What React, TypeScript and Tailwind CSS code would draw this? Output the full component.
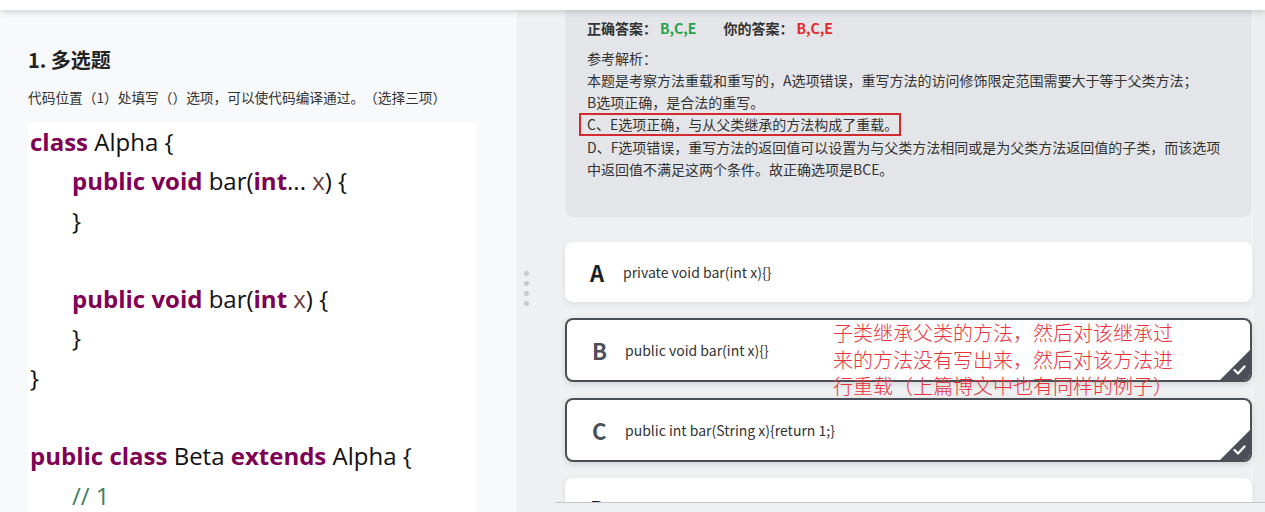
import React from "react";

const K = ({ children }: { children: React.ReactNode }) => (
  <span className="font-bold text-[#7f0055]">{children}</span>
);
const P = ({ children }: { children: React.ReactNode }) => (
  <span className="text-[#6a3e3e]">{children}</span>
);

const Check = () => (
  <div className="absolute bottom-0 right-0 w-[30px] h-[30px] bg-[#4b5058] [clip-path:polygon(100%_0,100%_100%,0_100%)]">
    <svg className="absolute right-[4px] bottom-[5px]" width="13" height="10" viewBox="0 0 13 10">
      <polyline points="1.5,5 5,8.5 11.5,1.5" fill="none" stroke="#ffffff" strokeWidth="2.2" strokeLinecap="round" strokeLinejoin="round" />
    </svg>
  </div>
);

const Option = ({
  letter,
  text,
  selected,
}: {
  letter: string;
  text: string;
  selected?: boolean;
}) => (
  <div
    className={
      selected
        ? "relative h-[64px] shrink-0 rounded-lg bg-white border-2 border-[#4b5058] overflow-hidden flex items-center pl-[25px] shadow-[0_2px_6px_rgba(0,0,0,0.12)]"
        : "relative h-[60px] shrink-0 rounded-lg bg-white overflow-hidden flex items-center pl-[25px] shadow-[0_2px_6px_rgba(0,0,0,0.08)]"
    }
  >
    <span
      className={
        selected
          ? "w-[33px] text-[22px] font-bold text-[#4b5058]"
          : "w-[33px] text-[22px] font-bold text-[#1c1f24]"
      }
    >
      {letter}
    </span>
    <span className="text-[14px] text-[#333]">{text}</span>
    {selected && <Check />}
  </div>
);

export default function App() {
  return (
    <div
      className="relative w-[1265px] h-[512px] overflow-hidden bg-[#eef0f2] flex flex-col [text-spacing-trim:space-all]"
      style={{ fontFamily: '"Noto Sans CJK SC", "Noto Sans", sans-serif' }}
    >
      <div className="h-[10px] shrink-0 bg-white relative z-10 shadow-[0_2px_6px_rgba(0,0,0,0.16)]" />
      <div className="flex flex-1 min-h-0">
        {/* Left panel */}
        <div className="w-[517px] shrink-0 bg-[#f8f9fb] pl-[28px] pt-[37px] overflow-hidden">
          <div className="text-[20px] leading-[26px] font-bold text-[#222]">1. 多选题</div>
          <div className="mt-[14px] text-[13.7px] leading-[20px] text-[#333]">
            代码位置（1）处填写（）选项，可以使代码编译通过。（选择三项）
          </div>
          <div
            className="mt-[15px] w-[448px] h-[400px] bg-white pl-[2px] text-[24px] leading-[39.3px] text-[#111]"
            style={{ fontFamily: '"Open Sans", "Noto Sans", sans-serif' }}
          >
            <div>
              <K>class</K> Alpha {"{"}
            </div>
            <div className="pl-[42px]">
              <K>public</K> <K>void</K> bar(<K>int</K>... <P>x</P>) {"{"}
            </div>
            <div className="pl-[42px]">{"}"}</div>
            <div>&nbsp;</div>
            <div className="pl-[42px]">
              <K>public</K> <K>void</K> bar(<K>int</K> <P>x</P>) {"{"}
            </div>
            <div className="pl-[42px]">{"}"}</div>
            <div>{"}"}</div>
            <div>&nbsp;</div>
            <div>
              <K>public</K> <K>class</K> Beta <K>extends</K> Alpha {"{"}
            </div>
            <div className="pl-[42px] text-[#3f7f5f]">// 1</div>
          </div>
        </div>

        {/* Resize handle */}
        <div className="w-[48px] shrink-0 pl-[6.5px] pt-[260.5px] flex flex-col gap-[5px]">
          <div className="w-[5px] h-[5px] rounded-full bg-[#c8c9cc]" />
          <div className="w-[5px] h-[5px] rounded-full bg-[#c8c9cc]" />
          <div className="w-[5px] h-[5px] rounded-full bg-[#c8c9cc]" />
          <div className="w-[5px] h-[5px] rounded-full bg-[#c8c9cc]" />
        </div>

        {/* Right content */}
        <div className="w-[687px] shrink-0 flex flex-col">
          <div className="h-[207px] shrink-0 rounded-b-lg bg-[#e4e5e8] px-[22px] pt-[7px]">
            <div className="flex items-center text-[14px] leading-[22px] font-bold text-[#333]">
              <span>正确答案：</span>
              <span className="ml-[3px] text-[#1fa24a]">B,C,E</span>
              <span className="ml-[27px]">你的答案：</span>
              <span className="ml-[3px] text-[#e3262c]">B,C,E</span>
            </div>
            <div className="mt-[8px] text-[14px] leading-[22px] text-[#333]">
              <div>参考解析：</div>
              <div>本题是考察方法重载和重写的，A选项错误，重写方法的访问修饰限定范围需要大于等于父类方法；</div>
              <div>B选项正确，是合法的重写。</div>
              <div className="h-[22.5px] flex items-center">
                <span className="-ml-[8px] h-[23px] pl-[6px] pr-[1px] border-2 border-[#d42a2f] leading-[19px]">
                  C、E选项正确，与从父类继承的方法构成了重载。
                </span>
              </div>
              <div>D、F选项错误，重写方法的返回值可以设置为与父类方法相同或是为父类方法返回值的子类，而该选项</div>
              <div>中返回值不满足这两个条件。故正确选项是BCE。</div>
            </div>
          </div>

          <div className="mt-[25px] flex flex-col gap-4">
            <Option letter="A" text="private void bar(int x){}" />
            <Option letter="B" text="public void bar(int x){}" selected />
            <Option letter="C" text="public int bar(String x){return 1;}" selected />
            <div className="relative h-[60px] shrink-0 rounded-lg bg-white overflow-hidden flex items-center pl-[25px] shadow-[0_2px_6px_rgba(0,0,0,0.08)]">
              <span className="w-[33px] text-[22px] font-bold text-[#1c1f24]">D</span>
            </div>
          </div>
        </div>

        <div className="w-[13px] shrink-0 bg-[#eceef0] border-l border-[#f4f5f6]" />
      </div>

      {/* bottom bar edge */}
      <div className="absolute left-[555px] right-0 top-[502px] bottom-0 bg-[#eff0f2] border-t border-[#c5c6c8]" />

      {/* red annotation */}
      <div className="absolute left-[833px] top-[320px] text-[20px] leading-[26.5px] text-[#e8323c] font-light">
        <div>子类继承父类的方法，然后对该继承过</div>
        <div>来的方法没有写出来，然后对该方法进</div>
        <div>行重载（上篇博文中也有同样的例子）</div>
      </div>
    </div>
  );
}
